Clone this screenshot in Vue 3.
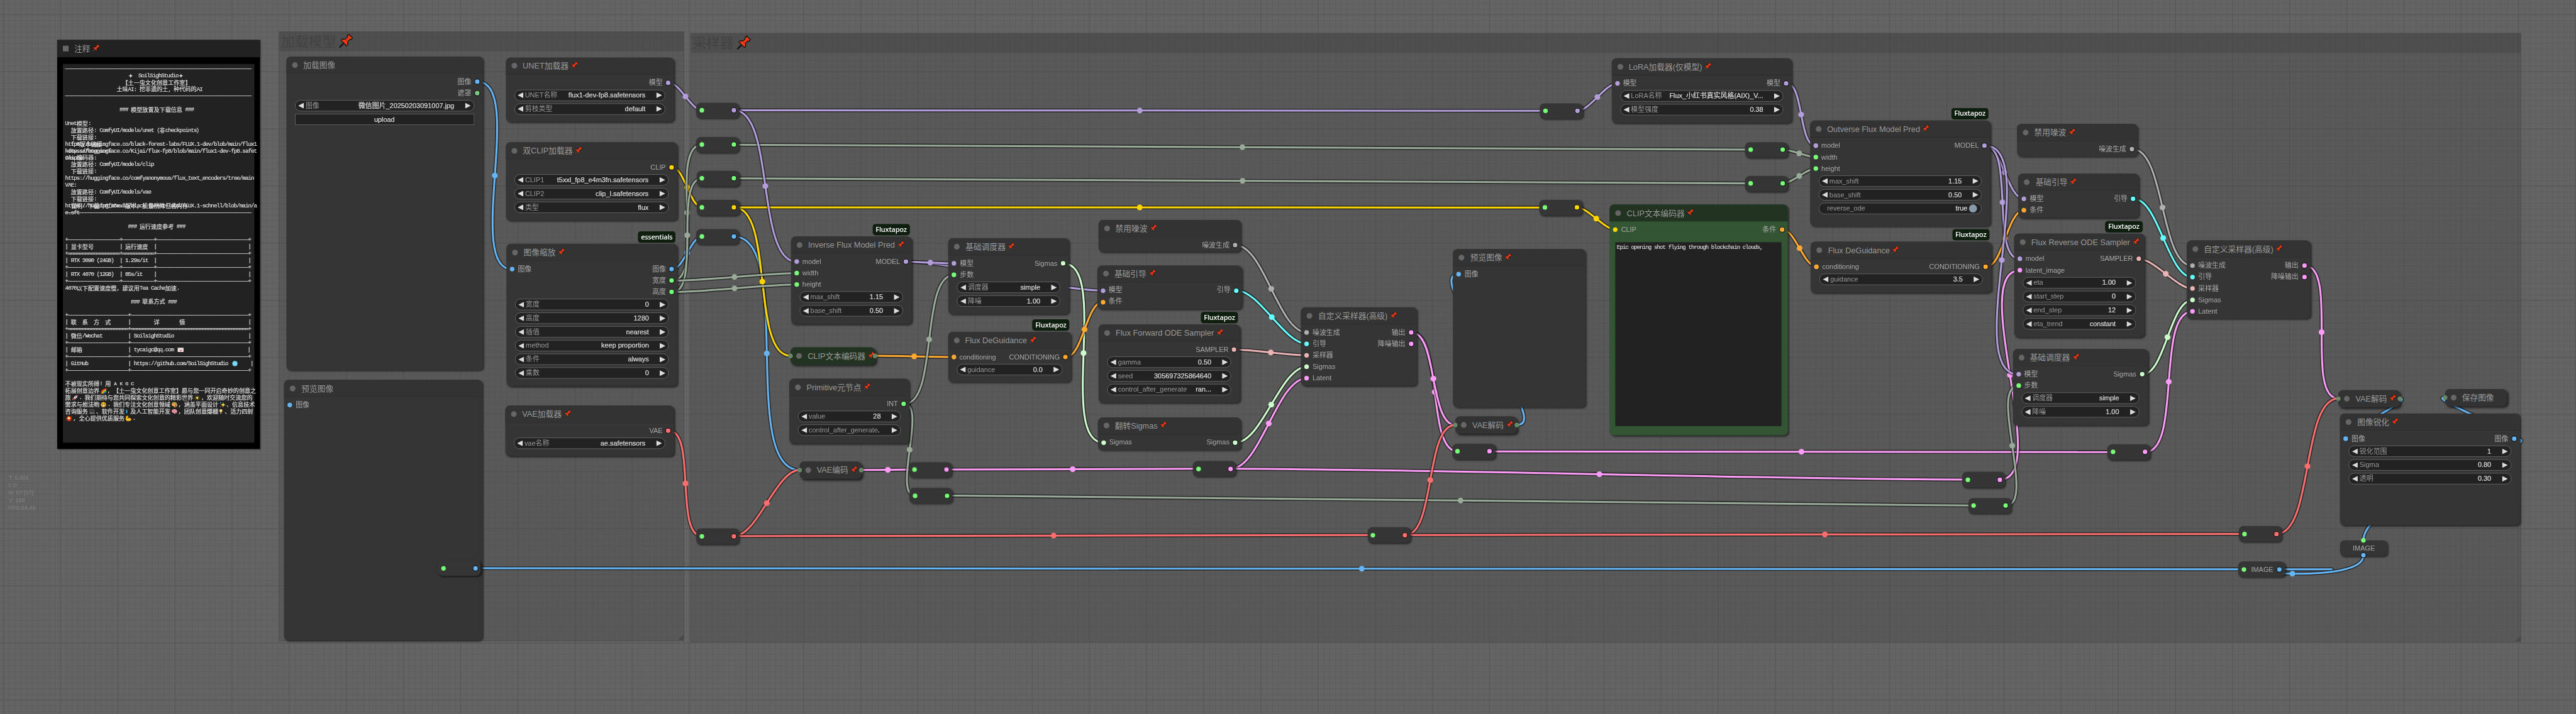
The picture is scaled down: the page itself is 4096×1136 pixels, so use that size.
<script setup>
const C = {
  model: '#b39ddb', image: '#64b5f6', mask: '#81c784', clip: '#ffd500', vae: '#ff6e6e',
  cond: '#ffa931', latent: '#ff9cf9', sigmas: '#cdffcd', sampler: '#ecb4b4',
  noise: '#b0b0b0', guider: '#66ffff', any: '#77ff77', int: '#99aa99',
}

// Each node: x / y of the title's top-left corner, right and bottom edges
const nodes = [
  { id: 'load', t: '加载图像', x: 500.7, y: 99, r: 844.6, b: 647.8, outs: [['图像', C.image], ['遮罩', C.mask]],
    w: [['图像', '微信图片_20250203091007.jpg'], { button: 'upload' }] },
  { id: 'unet', t: 'UNET加载器', pin: 1, x: 884.5, y: 100.7, r: 1179.3, b: 213.3, outs: [['模型', C.model]],
    w: [['UNET名称', 'flux1-dev-fp8.safetensors'], ['剪枝类型', 'default']] },
  { id: 'dual', t: '双CLIP加载器', pin: 1, x: 884.7, y: 249, r: 1184.8, b: 386, outs: [['CLIP', C.clip]],
    w: [['CLIP1', 't5xxl_fp8_e4m3fn.safetensors'], ['CLIP2', 'clip_l.safetensors'], ['类型', 'flux']] },
  { id: 'scale', t: '图像缩放', pin: 1, badge: 'essentials', x: 886, y: 427.4, r: 1185.3, b: 676, ins: [['图像', C.image]],
    outs: [['图像', C.image], ['宽度', C.any], ['高度', C.any]],
    w: [['宽度', '0'], ['高度', '1280'], ['插值', 'nearest'], ['method', 'keep proportion'], ['条件', 'always'], ['乘数', '0']] },
  { id: 'vae', t: 'VAE加载器', pin: 1, x: 883.6, y: 710, r: 1179.3, b: 798.3, outs: [['VAE', C.vae]],
    w: [['vae名称', 'ae.safetensors']] },
  { id: 'prev0', t: '预览图像', x: 497.4, y: 665.2, r: 844, b: 1121.5, ins: [['图像', C.image]] },
  { id: 'inv', t: 'Inverse Flux Model Pred', pin: 1, badge: 'Fluxtapoz', x: 1383.9, y: 414.3, r: 1595, b: 566.8,
    ins: [['model', C.model], ['width', C.any], ['height', C.any]], outs: [['MODEL', C.model]],
    w: [['max_shift', '1.15'], ['base_shift', '0.50']] },
  { id: 'sch1', t: '基础调度器', pin: 1, x: 1659.4, y: 417.3, r: 1870, b: 550, ins: [['模型', C.model], ['步数', C.any]],
    outs: [['Sigmas', C.sigmas]], w: [['调度器', 'simple'], ['降噪', '1.00']] },
  { id: 'enc1', t: 'CLIP文本编码器', pin: 1, fold: 1, both: 1, tone: 'green', x: 1383, y: 607.9, r: 1530.5, b: 637.9 },
  { id: 'deg1', t: 'Flux DeGuidance', pin: 1, badge: 'Fluxtapoz', x: 1658.5, y: 581, r: 1874.3, b: 669.3,
    ins: [['conditioning', C.cond]], outs: [['CONDITIONING', C.cond]], w: [['guidance', '0.0']] },
  { id: 'prim', t: 'Primitive元节点', pin: 1, x: 1381.1, y: 663.2, r: 1591, b: 776, outs: [['INT', C.any]],
    w: [['value', '28'], ['control_after_generate', '.', 'tight']] },
  { id: 'venc', t: 'VAE编码', pin: 1, fold: 1, both: 1, x: 1399, y: 807.9, r: 1506.5, b: 837.9 },
  { id: 'noi1', t: '禁用噪波', pin: 1, x: 1921.5, y: 385.3, r: 2171, b: 441.5, outs: [['噪波生成', C.noise]] },
  { id: 'gui1', t: '基础引导', pin: 1, x: 1919.7, y: 464.5, r: 2172.9, b: 540.6,
    ins: [['模型', C.model], ['条件', C.cond]], outs: [['引导', C.guider]] },
  { id: 'fwd', t: 'Flux Forward ODE Sampler', pin: 1, badge: 'Fluxtapoz', x: 1922, y: 568.2, r: 2169.3, b: 705.2,
    outs: [['SAMPLER', C.sampler]],
    w: [['gamma', '0.50'], ['seed', '305697325864640'], ['control_after_generate', 'ran...']] },
  { id: 'flip', t: '翻转Sigmas', pin: 1, x: 1920.6, y: 730.8, r: 2171, b: 788.2,
    ins: [['Sigmas', C.sigmas]], outs: [['Sigmas', C.sigmas]] },
  { id: 'smp1', t: '自定义采样器(高级)', pin: 1, x: 2276.4, y: 538, r: 2478.7, b: 675,
    ins: [['噪波生成', C.noise], ['引导', C.guider], ['采样器', C.sampler], ['Sigmas', C.sigmas], ['Latent', C.latent]],
    outs: [['输出', C.latent], ['降噪输出', C.latent]] },
  { id: 'prev1', t: '预览图像', pin: 1, x: 2542.4, y: 436, r: 2774.3, b: 712.9, ins: [['图像', C.image]] },
  { id: 'vdec1', t: 'VAE解码', pin: 1, fold: 1, both: 1, x: 2546, y: 729, r: 2653.5, b: 759 },
  { id: 'lora', t: 'LoRA加载器(仅模型)', pin: 1, x: 2819.6, y: 102, r: 3135, b: 215,
    ins: [['模型', C.model]], outs: [['模型', C.model]],
    w: [['LoRA名称', 'Flux_小红书真实风格(AIX)_V...'], ['模型强度', '0.38']] },
  { id: 'enc2', t: 'CLIP文本编码器', pin: 1, tone: 'green', x: 2816.3, y: 358, r: 3127.8, b: 762,
    ins: [['CLIP', C.clip]], outs: [['条件', C.cond]], area: 'Epic opening shot flying through blockchain clouds,' },
  { id: 'out', t: 'Outverse Flux Model Pred', pin: 1, badge: 'Fluxtapoz', x: 3166.7, y: 211, r: 3482.3, b: 396,
    ins: [['model', C.model], ['width', C.any], ['height', C.any]], outs: [['MODEL', C.model]],
    w: [['max_shift', '1.15'], ['base_shift', '0.50'], { toggle: 'reverse_ode' }] },
  { id: 'deg2', t: 'Flux DeGuidance', pin: 1, badge: 'Fluxtapoz', x: 3168.3, y: 423, r: 3484, b: 511.7,
    ins: [['conditioning', C.cond]], outs: [['CONDITIONING', C.cond]], w: [['guidance', '3.5']] },
  { id: 'noi2', t: '禁用噪波', pin: 1, x: 3529, y: 217, r: 3740, b: 273.5, outs: [['噪波生成', C.noise]] },
  { id: 'gui2', t: '基础引导', pin: 1, x: 3531.4, y: 304.2, r: 3742.5, b: 381,
    ins: [['模型', C.model], ['条件', C.cond]], outs: [['引导', C.guider]] },
  { id: 'rev', t: 'Flux Reverse ODE Sampler', pin: 1, badge: 'Fluxtapoz', x: 3523.9, y: 409.4, r: 3751.6, b: 590.3,
    ins: [['model', C.model], ['latent_image', C.latent]], outs: [['SAMPLER', C.sampler]],
    w: [['eta', '1.00'], ['start_step', '0'], ['end_step', '12'], ['eta_trend', 'constant']] },
  { id: 'sch2', t: '基础调度器', pin: 1, x: 3521.5, y: 611.4, r: 3757.6, b: 744.6, ins: [['模型', C.model], ['步数', C.any]],
    outs: [['Sigmas', C.sigmas]], w: [['调度器', 'simple'], ['降噪', '1.00']] },
  { id: 'smp2', t: '自定义采样器(高级)', pin: 1, x: 3826, y: 421.3, r: 4041.5, b: 558,
    ins: [['噪波生成', C.noise], ['引导', C.guider], ['采样器', C.sampler], ['Sigmas', C.sigmas], ['Latent', C.latent]],
    outs: [['输出', C.latent], ['降噪输出', C.latent]] },
  { id: 'vdec2', t: 'VAE解码', pin: 1, fold: 1, both: 1, x: 4091.4, y: 682.7, r: 4198.9, b: 712.7 },
  { id: 'save', t: '保存图像', fold: 1, x: 4277.5, y: 680.7, r: 4386.4, b: 710.7 },
  { id: 'sharp', t: '图像锐化', pin: 1, x: 4094.3, y: 724.3, r: 4408.6, b: 919.3,
    ins: [['图像', C.image]], outs: [['图像', C.image]], w: [['锐化范围', '1'], ['Sigma', '0.80'], ['透明', '0.30']] },
]

// Reroutes: left edge, vertical centre of the slots, output colour
const reroutes = [
  { id: 'r0', x: 766, y: 994.6, c: C.image },
  { id: 'r1', x: 1218.3, y: 193, c: C.model },
  { id: 'r2', x: 1218.3, y: 253.3, c: C.any },
  { id: 'r3', x: 1218.7, y: 312.3, c: C.any },
  { id: 'r4', x: 1218.7, y: 363, c: C.clip },
  { id: 'r5', x: 1218.3, y: 414.3, c: C.image },
  { id: 'r6', x: 1590.2, y: 822, c: C.latent },
  { id: 'r7', x: 1591, y: 867.5, c: C.any },
  { id: 'r8', x: 1218.3, y: 938.6, c: C.vae },
  { id: 'r9', x: 2087.4, y: 820.7, c: C.latent },
  { id: 'r10', x: 2540.6, y: 790.4, c: C.latent },
  { id: 'r11', x: 2392.7, y: 936.7, c: C.vae },
  { id: 'r12', x: 2694, y: 194, c: C.model },
  { id: 'r13', x: 3053.2, y: 262, c: C.any },
  { id: 'r14', x: 3053.2, y: 321, c: C.any },
  { id: 'r15', x: 2693.4, y: 363.3, c: C.clip },
  { id: 'r16', x: 3687, y: 791.4, c: C.latent },
  { id: 'r17', x: 3433.3, y: 839.6, c: C.latent },
  { id: 'r18', x: 3443.8, y: 885, c: C.any },
  { id: 'r19', x: 3917, y: 934.7, c: C.vae },
  { id: 'r20', x: 3916, y: 996.7, w: 82, c: C.image, label: 'IMAGE' },
]

const byId = Object.fromEntries([...nodes, ...reroutes].map((n) => [n.id, n]))
function port(ref, out) {
  if (ref === 'v.top') return [4135, 946]
  if (ref === 'v.bot') return [4135, 972.5]
  const [id, i = 0] = ref.split('.')
  const n = byId[id]
  if (n.r === undefined) return [out ? n.x + (n.w || 75) - 9 : n.x + 10, n.y]
  if (n.fold) return [out ? n.r : n.x, n.y + 15]
  return [out ? n.r - 9 : n.x + 10, n.y + 44 + 20 * i]
}
const wires = [
  ['load.0', 'scale.0', C.image], ['unet', 'r1', C.model], ['dual', 'r4', C.clip], ['scale.0', 'r5', C.image],
  ['scale.1', 'r2', C.int], ['scale.2', 'r3', C.int], ['r5', 'venc', C.image],
  ['r4', 'enc1', C.clip], ['r4', 'r15', C.clip],
  ['scale.1', 'inv.1', C.int], ['scale.2', 'inv.2', C.int],
  ['vae', 'r8', C.vae], ['r2', 'r13', C.int], ['r3', 'r14', C.int],
  ['r1', 'r12', C.model], ['r1', 'inv.0', C.model],
  ['r8', 'venc', C.vae], ['r8', 'r11', C.vae], ['enc1', 'deg1.0', C.cond],
  ['inv', 'gui1.0', C.model], ['inv', 'sch1.0', C.model], ['sch1', 'flip', C.sigmas], ['deg1', 'gui1.1', C.cond],
  ['venc', 'r6', C.latent], ['prim', 'sch1.1', C.int], ['prim', 'r7', C.int],
  ['r6', 'r9', C.latent], ['r9', 'smp1.4', C.latent], ['r9', 'r17', C.latent], ['r7', 'r18', C.int],
  ['noi1', 'smp1.0', C.noise], ['gui1', 'smp1.1', C.guider], ['fwd', 'smp1.2', C.sampler], ['flip', 'smp1.3', C.sigmas],
  ['smp1.0', 'r10', C.latent], ['smp1.0', 'vdec1', C.latent], ['r11', 'vdec1', C.vae], ['r11', 'r19', C.vae],
  ['vdec1', 'prev1', C.image], ['r10', 'r16', C.latent],
  ['r12', 'lora', C.model], ['lora', 'out.0', C.model], ['r13', 'out.1', C.int], ['r14', 'out.2', C.int],
  ['r15', 'enc2', C.clip], ['enc2', 'deg2', C.cond], ['deg2', 'gui2.1', C.cond],
  ['out', 'gui2.0', C.model], ['r17', 'rev.1', C.latent], ['out', 'rev.0', C.model], ['out', 'sch2.0', C.model],
  ['noi2', 'smp2.0', C.noise], ['gui2', 'smp2.1', C.guider], ['rev', 'smp2.2', C.sampler], ['sch2', 'smp2.3', C.sigmas],
  ['r16', 'smp2.4', C.latent], ['r18', 'sch2.1', C.int],
  ['smp2.0', 'vdec2', C.latent], ['r19', 'vdec2', C.vae],
  ['vdec2', 'sharp', C.image], ['sharp', 'save', C.image], ['sharp', 'v.top', C.image],
  ['r20', 'r0', C.image], ['v.bot', 'r20', C.image],
].map(([from, to, color]) => {
  const a = port(from, true)
  const b = port(to, false)
  const d = Math.hypot(a[0] - b[0], a[1] - b[1]) * 0.25
  const p = from === 'v.bot' ? [a[0], a[1] + d] : [a[0] + d, a[1]]
  const q = to === 'v.top' ? [b[0], b[1] - d] : [b[0] - d, b[1]]
  const mid = [0, 1].map((k) => (a[k] + 3 * p[k] + 3 * q[k] + b[k]) / 8)
  return { color, mid, d: `M${a} C${p} ${q} ${b}` }
})

const box = (n) => ({ left: n.x + 'px', top: n.y + 'px', width: n.r - n.x + 'px', height: n.b - n.y + 'px' })
const slotRows = (n) => Math.max((n.ins || []).length, (n.outs || []).length)

const glyphs = {
  mail: '<rect x="2" y="4" width="22" height="16" fill="#f3f3f3"/><path d="M2 4l11 9 11-9" stroke="#ccc" fill="none" stroke-width="2"/><rect x="9" y="11" width="9" height="7" fill="#e88"/>',
  globe: '<circle cx="13" cy="12" r="10" fill="#38c6f4"/><path d="M3 12h20M13 2v20M5 7h16M5 17h16M8 3q-4 9 0 18M18 3q4 9 0 18" stroke="#d8f5ff" fill="none" stroke-width="1.2"/>',
  rainbow: '<g fill="none" stroke-width="3"><path d="M4 22Q4 6 24 3" stroke="#e33"/><path d="M7 22Q8 9 24 6" stroke="#f90"/><path d="M10 22Q11 12 24 9" stroke="#fd3"/><path d="M13 22Q14 15 24 12" stroke="#3b4"/><path d="M16 22Q17 18 24 15" stroke="#46d"/></g>',
  rocket: '<path d="M24 2Q14 2 8 12l5 5Q23 12 24 2z" fill="#e8e8ee"/><path d="M24 2l-7 1 6 6z" fill="#e33"/><path d="M8 11l-5 3 5 1zM14 17l-2 6-2-6z" fill="#e33"/><circle cx="16" cy="9" r="2.4" fill="#29c"/><path d="M9 16l-6 6 2-7z" fill="#fb3"/>',
  star: '<path d="M13 1v22M2 12h22M5 4l16 16M21 4L5 20" stroke="#8a7a10" stroke-width="2"/><circle cx="13" cy="12" r="4" fill="#ffe63b"/>',
  smile: '<circle cx="13" cy="12" r="10" fill="#fcc21b"/><circle cx="9" cy="9" r="1.7" fill="#422"/><circle cx="17" cy="9" r="1.7" fill="#422"/><path d="M7 13h12q-1 6-6 6t-6-6z" fill="#fff" stroke="#422"/>',
  palette: '<path d="M13 2C6 2 2 7 3 12s6 4 8 6 0 4 4 4 9-4 9-10S19 2 13 2z" fill="#f6b04e"/><circle cx="9" cy="8" r="2.2" fill="#e33"/><circle cx="15" cy="6" r="2.2" fill="#3a5"/><circle cx="19" cy="11" r="2.2" fill="#36c"/><circle cx="17" cy="17" r="2.2" fill="#222"/>',
  spark: '<path d="M16 3l2.500 7 7 2.500-7 2.500-2.500 7-2.500-7-7-2.500 7-2.500z" fill="#ffe03a"/><path d="M6 1l1 3 3 1-3 1-1 3-1-3-3-1 3-1z" fill="#3bd"/><circle cx="6" cy="20" r="2" fill="#d4c"/>',
  laptop: '<rect x="5" y="5" width="16" height="11" fill="#333" stroke="#888" stroke-width="1.500"/><path d="M2 20h22l-3-4H5z" fill="#777"/>',
  phone: '<rect x="4" y="1" width="11" height="22" fill="#111"/><rect x="6" y="3" width="7" height="17" fill="#39c"/>',
  brain: '<path d="M4 13Q1 7 8 4q8-4 13 2 5 5 1 10-2 4-6 2-1 3-4 2l-2-4q-5 2-6-3z" fill="#f19aa8"/><path d="M7 8q5-2 6 3M14 5q4 2 3 7M8 14q6-2 12 1" stroke="#c5606f" fill="none" stroke-width="1.500"/>',
  bulb: '<circle cx="9" cy="8" r="7" fill="#fbd28a"/><path d="M6 14h6v6H6z" fill="#d9a55c"/><path d="M7 20h4v3H7z" fill="#999"/>',
  boom: '<path d="M13 0l3 6 7-3-3 7 5 3-6 3 2 7-7-3-4 4-2-6-7 2 4-6-4-5 6-1-1-7 5 4z" fill="#e23b1e"/><circle cx="12" cy="11" r="5" fill="#ffc93c"/><circle cx="12" cy="11" r="2.500" fill="#fff"/>',
  arm: '<path d="M4 3l6-1 2 5-4 2 1 4q4-4 10-2 5 3 4 7-5 5-14 4Q2 21 2 14z" fill="#fcc21b" stroke="#d9971c"/>',
}
const sp = (n) => ' '.repeat(n)
const da = (n) => '─'.repeat(n)
const eq = (n) => '═'.repeat(n)
const t1 = `+${da(18)}+${da(11)}+${da(32)}+`
const t2 = `+${da(21)}+${da(41)}+`
const note = [
  [da(65)],
  [sp(22) + '✦  SoilSighStudio✦'],
  [sp(20) + '【土一虫文化创意工作室】'],
  [sp(18) + '土味AI: 挖非遗的土, 种代码的AI'],
  [da(65)],
  [''],
  [sp(19) + '### 模型放置及下载信息 ###'],
  [''],
  ['Unet模型:'],
  ['  放置路径: ComfyUI/models/unet（非checkpoints）'],
  ['  下载链接:'],
  ['https://huggingface.co/black-forest-labs/FLUX.1-dev/blob/main/flux1', '  fp8版本链接:'],
  ['https://huggingface.co/Kijai/flux-fp8/blob/main/flux1-dev-fp8.safet', '-dev.safetensors'],
  ['Clip编码器:', 'ensors'],
  ['  放置路径: ComfyUI/models/clip'],
  ['  下载链接:'],
  ['https://huggingface.co/comfyanonymous/flux_text_encoders/tree/main'],
  ['VAE:'],
  ['  放置路径: ComfyUI/models/vae'],
  ['  下载链接:'],
  ['https://huggingface.co/black-forest-labs/FLUX.1-schnell/blob/main/a', '  说明: 下载fp8_t5xxl版本, 质量稍降但省内存'],
  [da(65), 'e.sft'],
  [''],
  [sp(22) + '### 运行速度参考 ###'],
  [''],
  [t1],
  [`| 显卡型号${sp(9)}| 运行速度  |${sp(32)}|`],
  [`+${eq(18)}+${eq(11)}+${da(32)}+`],
  [`| RTX 3090 (24GB)  | 1.29s/it  |${sp(32)}|`],
  [t1],
  [`| RTX 4070 (12GB)  | 85s/it    |${sp(32)}|`],
  [t1],
  ['4070以下配置速度慢, 建议用Tea Cache加速.'],
  [''],
  [sp(23) + '### 联系方式 ###'],
  [''],
  [t2],
  [`| 联  系  方  式${sp(6)}|${sp(8)}详${sp(7)}情${sp(22)}|`],
  [`+${eq(21)}+${eq(41)}+`],
  [`| 微信/Wechat${sp(9)}| SoilsighStudio${sp(26)}|`],
  [t2],
  [`| 邮箱${sp(16)}| tycaigc@qq.com {mail}${sp(22)}|`],
  [t2],
  [`| GitHub${sp(14)}| https://github.com/SoilSighStudio {globe}${sp(4)}|`],
  [t2],
  [''],
  ['不被现实所缚! 用 ᴀ ᴋ ɢ ᴄ'],
  ['拓展创意边界{rainbow}, 【土一虫文化创意工作室】愿与您一同开启奇妙的创意之'],
  ['旅{rocket}. 我们期待与您共同探索文化创意的精彩世界{star}, 欢迎随时交流您的'],
  ['需求与想法哟{smile}. 我们专注文化创意领域{palette}, 涵盖平面设计{spark}、信息技术'],
  ['咨询服务{laptop}、软件开发{phone}及人工智能开发{brain}, 团队创意爆棚{bulb}、活力四射'],
  ['{boom}, 全心提供优质服务{arm}.'],
].map((row) => row.map((text) => [...text.matchAll(/\{(\w+)\}|[\x20-\x7a\x7c-\x7e\u2500-\u257f\u1d00-\u1d7f\u0262]+|[^\x20-\x7e\u2500-\u257f\u1d00-\u1d7f\u0262]+/g)].map((m) =>
  m[1] ? { icon: m[1] } : { s: m[0], half: /^[\x20-\x7e\u2500-\u257f\u1d00-\u1d7f\u0262]/.test(m[0]), star: m[0] === '✦' })))

const stats = ['T: 0.00s', 'I: 0', 'N: 57 [57]', 'V: 168', 'FPS:68.49']
const pinArt = '<g transform="rotate(45 14 14)" stroke="#111" stroke-width="1.6" stroke-linejoin="round"><path d="M13 18h2l-.4 12h-1.200z" fill="#ddd"/><path d="M8.500-2h11v4.500l-2 1v7l4.500 4v3.500H6V14.500l4.500-4v-7l-2-1z" fill="#f03a17"/></g><path d="M13.500 8.500l6 6" stroke="#a51c08" stroke-width="1.200"/>'
</script>

<template>
  <div class="viewport">
    <main class="stage">
      <svg class="layer" width="4507" height="1250">
        <defs>
          <pattern id="minor" x="6" y="5.5" width="10" height="10" patternUnits="userSpaceOnUse">
            <path d="M0 .5H10M.5 0V10" class="minor" />
          </pattern>
          <pattern id="major" x="5" y="24.500" width="100" height="100" patternUnits="userSpaceOnUse">
            <path d="M0 1H100M1 0V100" class="major" />
          </pattern>
        </defs>
        <rect width="4507" height="1250" fill="url(#minor)" />
        <rect width="4507" height="1250" fill="url(#major)" />
      </svg>

      <section class="group first">
        <header>加载模型<svg class="pin" viewBox="0 0 28 28" v-html="pinArt"></svg></header>
      </section>
      <section class="group second">
        <header>采样器<svg class="pin" viewBox="0 0 28 28" v-html="pinArt"></svg></header>
      </section>

      <svg class="layer" width="4507" height="1250">
        <g v-for="(w, i) in wires" :key="i">
          <path :d="w.d" class="halo" />
          <path :d="w.d" class="wire" :stroke="w.color" />
          <circle :cx="w.mid[0]" :cy="w.mid[1]" r="5" :fill="w.color" />
        </g>
      </svg>

      <article class="note">
        <header><i class="square"></i>注释<svg class="pin" viewBox="0 0 28 28" v-html="pinArt"></svg></header>
        <div class="paper">
          <div v-for="(row, i) in note" :key="i" class="row">
            <div v-for="(col, k) in row" :key="k" class="line" :class="{ over: k }">
              <template v-for="(p, j) in col" :key="j"><svg
                v-if="p.icon" class="emoji" :class="p.icon" viewBox="0 0 26 24" v-html="glyphs[p.icon]"></svg><span
                v-else :class="{ half: p.half, star: p.star }">{{ p.s }}</span></template>
            </div>
          </div>
        </div>
      </article>

      <article v-for="n in nodes" :key="n.id" class="node" :class="[n.tone, { fold: n.fold }]" :style="box(n)">
        <span v-if="n.badge" class="badge">{{ n.badge }}</span>
        <header><i class="dot"></i><span>{{ n.t }}</span><svg v-if="n.pin" class="pin" viewBox="0 0 28 28" v-html="pinArt"></svg></header>
        <template v-if="n.fold">
          <i class="end left"></i><i v-if="n.both" class="end right"></i>
        </template>
        <div v-else class="body">
          <div class="slots" :style="{ height: slotRows(n) * 20 + 6 + 'px' }">
            <ul>
              <li v-for="s in n.ins" :key="s[0]"><i :style="{ background: s[1] }"></i>{{ s[0] }}</li>
            </ul>
            <ul class="outs">
              <li v-for="s in n.outs" :key="s[0]">{{ s[0] }}<i :style="{ background: s[1] }"></i></li>
            </ul>
          </div>
          <div v-for="(w, i) in n.w" :key="i" class="widget" :class="{ button: w.button, toggle: w.toggle, tight: w[2] }">
            <template v-if="w.button">{{ w.button }}</template>
            <template v-else-if="w.toggle"><span>{{ w.toggle }}</span><b>true</b><i class="knob"></i></template>
            <template v-else><i class="prev"></i><span>{{ w[0] }}</span><b>{{ w[1] }}</b><i class="next"></i></template>
          </div>
          <div v-if="n.area" class="area"><span class="half">{{ n.area }}</span></div>
        </div>
      </article>

      <div v-for="r in reroutes" :key="r.id" class="reroute" :style="{ left: r.x + 'px', top: r.y - 13.5 + 'px', width: (r.w || 75) + 'px' }">
        <i></i><span>{{ r.label }}</span><i class="o" :style="{ background: r.c }"></i>
      </div>
      <div class="reroute upright"><i class="n"></i><span>IMAGE</span><i class="o s"></i></div>

      <ul class="stats">
        <li v-for="s in stats" :key="s">{{ s }}</li>
      </ul>
    </main>
  </div>
</template>

<style>
html, body { margin: 0; background: #646464; }
</style>

<style scoped>
.viewport { width: 4096px; height: 1136px; overflow: hidden; background: #646464; }
.stage {
  position: relative; width: 4507px; height: 1250px;
  transform: scale(0.90881); transform-origin: 0 0;
  font-family: "Liberation Sans", "Noto Sans CJK SC", sans-serif;
}
.stage ul { list-style: none; margin: 0; padding: 0; }
.layer { position: absolute; inset: 0; }
.minor { stroke: #5d5d5d; stroke-width: 1; fill: none; }
.major { stroke: #595959; stroke-width: 1.6; fill: none; }
.halo { fill: none; stroke: rgba(0, 0, 0, 0.5); stroke-width: 6.8; }
.wire { fill: none; stroke-width: 3.3; }
.pin { width: 14px; height: 14px; flex: none; margin-left: 2px; overflow: visible; }

.group { position: absolute; box-sizing: border-box; background: rgba(66, 66, 66, 0.3); border: 1px solid #4d4d4d; }
.group.first { left: 488px; top: 55px; width: 709px; height: 1067px; }
.group.second { left: 1208px; top: 58px; width: 3203px; height: 1066px; }
.group header {
  display: flex; align-items: center; height: 34px; padding-left: 3px;
  background: rgba(60, 60, 60, 0.35); color: #424242; font-size: 24px; line-height: 34px;
}
.group .pin { width: 24px; height: 24px; margin-left: 4px; }
.group::after {
  content: ""; position: absolute; right: 0; bottom: 0; width: 10px; height: 10px;
  background: #484848; clip-path: polygon(100% 0, 100% 100%, 0 100%);
}

.node { position: absolute; box-sizing: border-box; border-radius: 8px; background: #353535; box-shadow: 2px 2px 3px rgba(0, 0, 0, 0.5); }
.node header {
  display: flex; align-items: center; box-sizing: border-box; height: 30px; padding-left: 10px;
  border-radius: 8px 8px 0 0; border-bottom: 1px solid #2b2b2b; background: #333;
  color: #999; font-size: 14px; line-height: 29px; white-space: nowrap;
}
.node header span { padding-top: 1px; }
.dot { width: 10px; height: 10px; border-radius: 50%; background: #666; margin-right: 10px; flex: none; }
.node.fold { box-shadow: 3px 3px 4px rgba(0, 0, 0, 0.6); }
.node.fold header { border-bottom: 0; border-radius: 8px; }
.node.green { background: #353; }
.node.green header { background: #232; border-color: #2a442a; }
.end { position: absolute; top: 11px; width: 8px; height: 8px; border-radius: 50%; background: #686; }
.end.left { left: -4px; }
.end.right { right: -4px; }
.badge {
  position: absolute; right: 3px; top: -22px; height: 20px; padding: 0 5.5px; border-radius: 5px;
  background: #0f1f0f; color: #fff; font: 600 12px/20px "Open Sans", "Noto Sans", sans-serif; letter-spacing: -0.2px;
}
.slots { display: flex; justify-content: space-between; box-sizing: border-box; padding-top: 4px; color: #aaa; font-size: 12px; line-height: 21px; }
.slots li { display: flex; align-items: center; height: 20px; padding-left: 6px; white-space: nowrap; }
.slots li i { width: 8px; height: 8px; border-radius: 50%; margin-right: 6px; }
.slots .outs li { justify-content: flex-end; padding: 0 5px 0 0; }
.slots .outs li i { border: 1px solid #000; margin: 0 0 0 5px; }
.widget {
  display: flex; align-items: center; box-sizing: border-box; height: 20px; margin: 0 15px 4px; padding: 0 6px;
  border: 1px solid #666; border-radius: 10px; background: #222; color: #999; font-size: 12px; line-height: 18px; white-space: nowrap;
}
.widget b { margin-left: auto; color: #ddd; font-weight: 400; -webkit-text-stroke: 0.25px #ddd; }
.prev, .next { width: 10px; height: 10px; background: #ddd; flex: none; }
.prev { clip-path: polygon(0 50%, 100% 0, 100% 100%); margin: 0 3px 0 -1px; }
.next { clip-path: polygon(100% 50%, 0 0, 0 100%); margin: 0 -1px 0 19px; }
.widget.tight b { margin-left: 0; }
.widget.tight .next { margin-left: auto; }
.widget.button { justify-content: center; border-radius: 0; color: #ddd; -webkit-text-stroke: 0.25px #ddd; }
.widget.toggle { padding: 0 7px 0 14px; }
.knob { width: 14px; height: 14px; border-radius: 50%; background: #89a; margin-left: 3px; }
.area { margin: 10px 10.5px 0 9.5px; height: 321.5px; background: #222; color: #ddd; font-size: 10px; line-height: 12px; padding: 3px 0 0 3px; box-sizing: border-box; -webkit-text-stroke: 0.15px #ddd; }

.half { font-family: "Liberation Mono", "DejaVu Sans Mono", monospace; letter-spacing: -1.001px; }
.note { position: absolute; left: 100px; top: 70px; width: 355px; height: 716px; background: #000; box-shadow: 2px 2px 3px rgba(0, 0, 0, 0.5); }
.note header { display: flex; align-items: center; height: 30px; padding-left: 10px; background: #222; color: #999; font-size: 14px; line-height: 30px; }
.square { width: 10px; height: 10px; margin-right: 10px; background: #666; }
.paper { margin: 12px 10px 0; height: 663px; padding: 2.5px 0 0 4px; box-sizing: border-box; background: #222; color: #ddd; font-size: 10px; line-height: 12px; -webkit-text-stroke: 0.25px #ddd; }
.row { position: relative; height: 12px; }
.line { display: flex; align-items: center; height: 12px; white-space: pre; }
.line.over { position: absolute; left: 0; top: 0; }
.star { display: inline-block; width: 8px; overflow: visible; }
.emoji { width: 12px; height: 11px; margin: 0 1px; flex: none; }
.emoji.phone { width: 10px; margin: 0; }
.emoji.bulb { width: 10px; margin: 0 0.5px; }

.reroute {
  position: absolute; display: flex; align-items: center; justify-content: space-between; box-sizing: border-box;
  height: 27px; padding: 0 4.5px 0 5.500px; border-radius: 8px; background: #353535; color: #aaa; font-size: 12px;
  box-shadow: 2px 2px 3px rgba(0, 0, 0, 0.5);
}
.reroute i { width: 8px; height: 8px; border-radius: 50%; background: #7f7; }
.reroute .o { border: 1px solid #000; background: #64b5f6; }
.reroute span { padding-left: 3px; }
.upright { left: 4094.3px; top: 946px; width: 83px; justify-content: center; padding: 0; }
.upright span { padding: 0; }
.upright i { position: absolute; left: 37px; }
.upright .n { top: -4px; }
.upright .o.s { left: 36px; bottom: -4px; }

.stats { position: absolute; left: 15px; top: 829.500px; color: #838383; font-size: 10px; line-height: 13px; }
</style>
